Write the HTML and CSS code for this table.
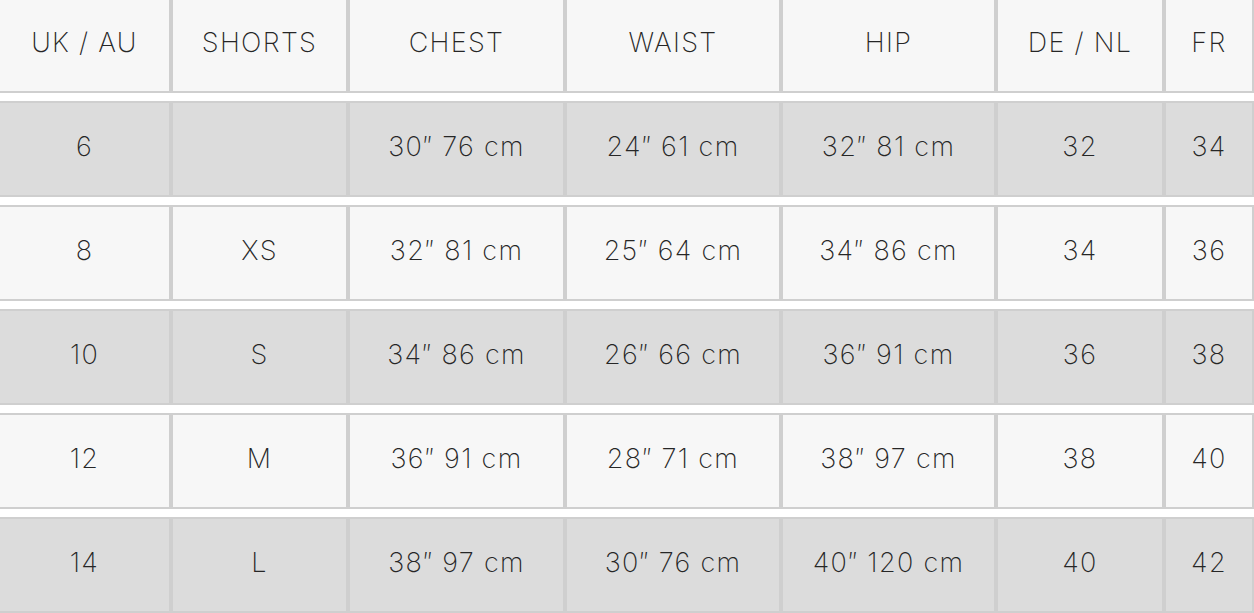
FILE: index.html
```html
<!DOCTYPE html>
<html>
<head>
<meta charset="utf-8">
<link rel="stylesheet" href="styles.css">
</head>
<body>
<table class="size-table">
  <colgroup>
    <col class="c1"><col class="c2"><col class="c3"><col class="c4"><col class="c5"><col class="c6"><col class="c7">
  </colgroup>
  <thead>
    <tr class="row light"><th>UK / AU</th><th>SHORTS</th><th>CHEST</th><th>WAIST</th><th>HIP</th><th>DE / NL</th><th>FR</th></tr>
  </thead>
  <tbody>
    <tr class="row dark"><td>6</td><td></td><td>30″ 76 cm</td><td>24″ 61 cm</td><td>32″ 81 cm</td><td>32</td><td>34</td></tr>
    <tr class="row light"><td>8</td><td>XS</td><td>32″ 81 cm</td><td>25″ 64 cm</td><td>34″ 86 cm</td><td>34</td><td>36</td></tr>
    <tr class="row dark"><td>10</td><td>S</td><td>34″ 86 cm</td><td>26″ 66 cm</td><td>36″ 91 cm</td><td>36</td><td>38</td></tr>
    <tr class="row light"><td>12</td><td>M</td><td>36″ 91 cm</td><td>28″ 71 cm</td><td>38″ 97 cm</td><td>38</td><td>40</td></tr>
    <tr class="row dark"><td>14</td><td>L</td><td>38″ 97 cm</td><td>30″ 76 cm</td><td>40″ 120 cm</td><td>40</td><td>42</td></tr>
  </tbody>
</table>
</body>
</html>
```
FILE: styles.css
```css
html, body {
  margin: 0;
  padding: 0;
  background: #ffffff;
  overflow: hidden;
}

.size-table {
  margin-top: -11px;
  margin-left: -2px;
  width: 1256px;
  table-layout: fixed;
  border-collapse: separate;
  border-spacing: 0 8px;
  font-family: Inter, "Noto Sans", sans-serif;
  font-weight: 200;
  font-size: 27px;
  letter-spacing: 1.3px;
  color: #262626;
}

.c1 { width: 173px; }
.c2 { width: 177px; }
.c3 { width: 217px; }
.c4 { width: 216px; }
.c5 { width: 215px; }
.c6 { width: 168px; }
.c7 { width: 90px; }

.size-table th,
.size-table td {
  box-sizing: border-box;
  height: 96px;
  padding: 0 0 6px 0;
  border: 2px solid #cfcfcf;
  text-align: center;
  vertical-align: middle;
  font-weight: 200;
  white-space: nowrap;
}

.light th,
.light td {
  background: #f7f7f7;
}

.dark td {
  background: #dcdcdc;
}
```
